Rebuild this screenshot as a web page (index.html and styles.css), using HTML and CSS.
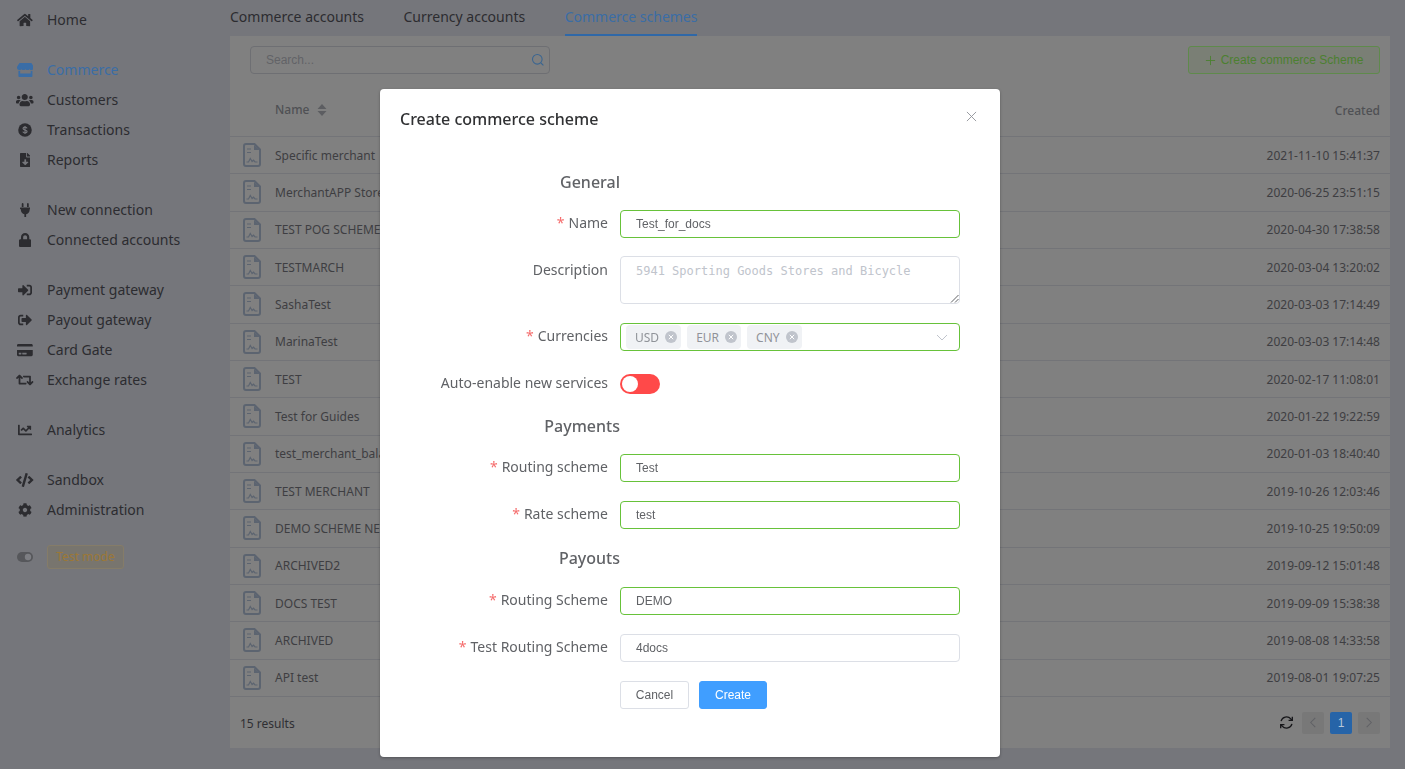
FILE: index.html
```html
<!DOCTYPE html>
<html lang="en">
<head>
<meta charset="utf-8">
<title>Create commerce scheme</title>
<link rel="stylesheet" href="styles.css">
</head>
<body>
<div class="app">
  <aside class="sidebar">
    <nav class="nav-group">
      <a class="nav-item"><span class="nav-icon"><svg class="fa" viewBox="0 0 576 512"><path d="M280.37 148.26L96 300.11V464a16 16 0 0 0 16 16l112.06-.29a16 16 0 0 0 15.92-16V368a16 16 0 0 1 16-16h64a16 16 0 0 1 16 16v95.64a16 16 0 0 0 16 16.05L464 480a16 16 0 0 0 16-16V300L295.67 148.26a12.19 12.19 0 0 0-15.3 0zM571.6 251.47L488 182.56V44.05a12 12 0 0 0-12-12h-56a12 12 0 0 0-12 12v72.61L318.47 43a48 48 0 0 0-61 0L4.34 251.47a12 12 0 0 0-1.6 16.9l25.5 31A12 12 0 0 0 45.15 301l235.22-193.74a12.19 12.19 0 0 1 15.3 0L530.9 301a12 12 0 0 0 16.9-1.6l25.5-31a12 12 0 0 0-1.7-16.93z"/></svg></span>Home</a>
    </nav>
    <nav class="nav-group">
      <a class="nav-item active"><span class="nav-icon"><svg class="fa" viewBox="0 0 616 512"><path d="M602 118.6L537.1 15C531.3 5.7 521 0 510 0H106C95 0 84.7 5.7 78.9 15L14 118.6c-33.9 54.1-3.9 129.3 59.4 137.9 4.6.6 9.2.9 13.7.9 29.9 0 56.4-13.1 74.6-33.4 18.2 20.3 44.8 33.4 74.6 33.4 29.9 0 56.4-13.1 74.6-33.4 18.2 20.3 44.8 33.4 74.6 33.4 29.9 0 56.4-13.1 74.6-33.4 18.3 20.3 44.8 33.4 74.6 33.4 4.6 0 9.1-.3 13.7-.9 63.5-8.5 93.6-83.7 59.6-137.9zM529.5 288c-10 0-19.9-1.5-29.5-3.8V384H116v-99.8c-9.6 2.2-19.5 3.8-29.5 3.8-6 0-12.1-.4-18-1.2-5.6-.8-11.1-2.1-16.4-3.6V480c0 17.7 14.3 32 32 32h448c17.7 0 32-14.3 32-32V283.2c-5.4 1.6-10.8 2.9-16.4 3.6-6.1.8-12.1 1.2-18.2 1.2z"/></svg></span>Commerce</a>
      <a class="nav-item"><span class="nav-icon"><svg class="fa" viewBox="0 0 640 512"><path d="M96 224c35.3 0 64-28.7 64-64s-28.7-64-64-64-64 28.7-64 64 28.7 64 64 64zm448 0c35.3 0 64-28.7 64-64s-28.7-64-64-64-64 28.7-64 64 28.7 64 64 64zm32 32h-64c-17.6 0-33.5 7.1-45.1 18.6 40.3 22.1 68.9 62 75.1 109.4h66c17.7 0 32-14.3 32-32v-32c0-35.3-28.7-64-64-64zm-256 0c61.9 0 112-50.1 112-112S381.9 32 320 32 208 82.1 208 144s50.1 112 112 112zm76.8 32h-8.3c-20.8 10-43.9 16-68.5 16s-47.6-6-68.5-16h-8.3C179.6 288 128 339.6 128 403.2V432c0 26.5 21.5 48 48 48h288c26.5 0 48-21.5 48-48v-28.8c0-63.6-51.6-115.2-115.2-115.2zm-223.7-13.4C161.5 263.1 145.6 256 128 256H64c-35.3 0-64 28.7-64 64v32c0 17.7 14.3 32 32 32h65.9c6.3-47.4 34.9-87.3 75.2-109.4z"/></svg></span>Customers</a>
      <a class="nav-item"><span class="nav-icon"><svg class="fa" viewBox="0 0 512 512"><circle cx="256" cy="256" r="248"/><path class="dollar" d="M330 195c-8-28-36-43-74-43-40 0-72 19-72 53 0 66 148 36 148 104 0 34-32 52-76 52-42 0-70-17-78-47M256 112v288"/></svg></span>Transactions</a>
      <a class="nav-item"><span class="nav-icon"><svg class="fa" viewBox="0 0 384 512"><path d="M224 136V0H24C10.7 0 0 10.7 0 24v464c0 13.3 10.7 24 24 24h336c13.3 0 24-10.7 24-24V160H248c-13.2 0-24-10.8-24-24zm76.45 211.36l-96.42 95.7c-6.65 6.61-17.39 6.61-24.04 0l-96.42-95.7C73.42 337.29 80.54 320 94.82 320H160v-80c0-8.84 7.16-16 16-16h32c8.84 0 16 7.16 16 16v80h65.18c14.28 0 21.4 17.29 11.27 27.36zM377 105L279.1 7c-4.5-4.5-10.6-7-17-7H256v128h128v-6.1c0-6.3-2.5-12.4-7-16.9z"/></svg></span>Reports</a>
    </nav>
    <nav class="nav-group">
      <a class="nav-item"><span class="nav-icon"><svg class="fa" viewBox="0 0 384 512"><path d="M256 144V32c0-17.673 14.327-32 32-32s32 14.327 32 32v112h-64zm112 16H16c-8.837 0-16 7.163-16 16v32c0 8.837 7.163 16 16 16h16v32c0 77.406 54.969 141.971 128 156.796V512h64v-99.204c73.031-14.825 128-79.39 128-156.796v-32h16c8.837 0 16-7.163 16-16v-32c0-8.837-7.163-16-16-16zm-240-16V32c0-17.673-14.327-32-32-32S64 14.327 64 32v112h64z"/></svg></span>New connection</a>
      <a class="nav-item"><span class="nav-icon"><svg class="fa" viewBox="0 0 448 512"><path d="M400 224h-24v-72C376 68.2 307.8 0 224 0S72 68.2 72 152v72H48c-26.5 0-48 21.5-48 48v192c0 26.5 21.5 48 48 48h352c26.5 0 48-21.5 48-48V272c0-26.5-21.5-48-48-48zm-104 0H152v-72c0-39.7 32.3-72 72-72s72 32.3 72 72v72z"/></svg></span>Connected accounts</a>
    </nav>
    <nav class="nav-group">
      <a class="nav-item"><span class="nav-icon"><svg class="fa" viewBox="0 0 512 512"><path d="M416 448h-84c-6.6 0-12-5.4-12-12v-40c0-6.6 5.4-12 12-12h84c17.7 0 32-14.3 32-32V160c0-17.7-14.3-32-32-32h-84c-6.6 0-12-5.4-12-12V76c0-6.6 5.4-12 12-12h84c53 0 96 43 96 96v192c0 53-43 96-96 96zm-47-201L201 79c-15-15-41-4.5-41 17v96H24c-13.3 0-24 10.7-24 24v96c0 13.3 10.7 24 24 24h136v96c0 21.5 26 32 41 17l168-168c9.3-9.4 9.3-24.6 0-34z"/></svg></span>Payment gateway</a>
      <a class="nav-item"><span class="nav-icon"><svg class="fa" viewBox="0 0 512 512"><path d="M497 273L329 441c-15 15-41 4.5-41-17v-96H152c-13.3 0-24-10.7-24-24v-96c0-13.3 10.7-24 24-24h136V88c0-21.4 25.9-32 41-17l168 168c9.3 9.4 9.3 24.6 0 34zM192 436v-40c0-6.6-5.4-12-12-12H96c-17.7 0-32-14.3-32-32V160c0-17.7 14.3-32 32-32h84c6.6 0 12-5.4 12-12V76c0-6.6-5.4-12-12-12H96c-53 0-96 43-96 96v192c0 53 43 96 96 96h84c6.6 0 12-5.4 12-12z"/></svg></span>Payout gateway</a>
      <a class="nav-item"><span class="nav-icon"><svg class="fa" viewBox="0 0 576 512"><path d="M0 432c0 26.5 21.5 48 48 48h480c26.5 0 48-21.5 48-48V256H0v176zm192-68c0-6.6 5.4-12 12-12h136c6.6 0 12 5.4 12 12v40c0 6.6-5.4 12-12 12H204c-6.6 0-12-5.4-12-12v-40zm-128 0c0-6.6 5.4-12 12-12h72c6.6 0 12 5.4 12 12v40c0 6.6-5.4 12-12 12H76c-6.6 0-12-5.4-12-12v-40zM576 80v48H0V80c0-26.5 21.5-48 48-48h480c26.5 0 48 21.5 48 48z"/></svg></span>Card Gate</a>
      <a class="nav-item"><span class="nav-icon"><svg class="fa" viewBox="0 0 640 512"><path d="M629.657 343.598L528.971 444.284c-9.373 9.372-24.568 9.372-33.941 0L394.343 343.598c-9.373-9.373-9.373-24.569 0-33.941l10.823-10.823c9.562-9.562 25.133-9.34 34.419.492L480 342.118V160H292.451a24.005 24.005 0 0 1-16.971-7.029l-16-16C244.361 121.851 255.069 96 276.451 96H520c13.255 0 24 10.745 24 24v222.118l40.416-42.792c9.285-9.831 24.856-10.054 34.419-.492l10.823 10.823c9.372 9.372 9.372 24.569-.001 33.941zm-265.138 15.431A23.999 23.999 0 0 0 347.548 352H160V169.881l40.416 42.792c9.286 9.831 24.856 10.054 34.419.491l10.822-10.822c9.373-9.373 9.373-24.569 0-33.941L144.971 67.716c-9.373-9.373-24.569-9.373-33.941 0L10.343 168.402c-9.373 9.373-9.373 24.569 0 33.941l10.822 10.822c9.562 9.562 25.133 9.34 34.419-.491L96 169.881V392c0 13.255 10.745 24 24 24h243.549c21.382 0 32.09-25.851 16.971-40.971l-16.001-16z"/></svg></span>Exchange rates</a>
    </nav>
    <nav class="nav-group">
      <a class="nav-item"><span class="nav-icon"><svg class="fa" viewBox="0 0 512 512"><path d="M496 384H64V80c0-8.84-7.16-16-16-16H16C7.16 64 0 71.16 0 80v336c0 17.67 14.33 32 32 32h464c8.84 0 16-7.16 16-16v-32c0-8.84-7.16-16-16-16zM464 96H345.94c-21.38 0-32.09 25.85-16.97 40.97l32.4 32.4L288 242.75l-73.37-73.37c-12.5-12.5-32.76-12.5-45.25 0l-68.69 68.69c-6.25 6.25-6.25 16.38 0 22.63l22.62 22.62c6.25 6.25 16.38 6.25 22.63 0L192 237.25l73.37 73.37c12.5 12.5 32.76 12.5 45.25 0l96-96 32.4 32.4c15.12 15.12 40.97 4.41 40.97-16.97V112c.01-8.84-7.15-16-15.99-16z"/></svg></span>Analytics</a>
    </nav>
    <nav class="nav-group">
      <a class="nav-item"><span class="nav-icon"><svg class="fa" viewBox="0 0 640 512"><path d="M278.9 511.5l-61-17.7c-6.4-1.8-10-8.5-8.2-14.9L346.2 8.7c1.8-6.4 8.5-10 14.9-8.2l61 17.7c6.4 1.8 10 8.5 8.2 14.9L293.8 503.3c-1.9 6.4-8.5 10.1-14.9 8.2zm-114-112.2l43.5-46.4c4.6-4.9 4.3-12.7-.8-17.2L117 256l90.6-79.7c5.1-4.5 5.5-12.3.8-17.2l-43.5-46.4c-4.5-4.8-12.1-5.1-17-.5L3.8 247.2c-5.1 4.7-5.1 12.8 0 17.5l144.1 135.1c4.9 4.6 12.5 4.4 17-.5zm327.2.6l144.1-135.1c5.1-4.7 5.1-12.8 0-17.5L492.1 112.1c-4.8-4.5-12.4-4.3-17 .5L431.6 159c-4.6 4.9-4.3 12.7.8 17.2L523 256l-90.6 79.7c-5.1 4.5-5.5 12.3-.8 17.2l43.5 46.4c4.5 4.9 12.1 5.1 17 .6z"/></svg></span>Sandbox</a>
      <a class="nav-item"><span class="nav-icon"><svg class="fa" viewBox="0 0 512 512"><path d="M487.4 315.7l-42.6-24.6c4.3-23.2 4.3-47 0-70.2l42.6-24.6c4.9-2.8 7.1-8.6 5.5-14-11.1-35.6-30-67.8-54.7-94.6-3.8-4.1-10-5.1-14.8-2.3L380.8 110c-17.9-15.4-38.5-27.3-60.8-35.1V25.8c0-5.6-3.9-10.5-9.4-11.7-36.7-8.2-74.3-7.8-109.2 0-5.5 1.2-9.4 6.1-9.4 11.7V75c-22.2 7.9-42.8 19.8-60.8 35.1L88.7 85.5c-4.9-2.8-11-1.9-14.8 2.3-24.7 26.7-43.6 58.9-54.7 94.6-1.7 5.4.6 11.2 5.5 14L67.3 221c-4.3 23.2-4.3 47 0 70.2l-42.6 24.6c-4.9 2.8-7.1 8.6-5.5 14 11.1 35.6 30 67.8 54.7 94.6 3.8 4.1 10 5.1 14.8 2.3l42.6-24.6c17.9 15.4 38.5 27.3 60.8 35.1v49.2c0 5.6 3.9 10.5 9.4 11.7 36.7 8.2 74.3 7.8 109.2 0 5.5-1.2 9.4-6.1 9.4-11.7v-49.2c22.2-7.9 42.8-19.8 60.8-35.1l42.6 24.6c4.9 2.8 11 1.9 14.8-2.3 24.7-26.7 43.6-58.9 54.7-94.6 1.5-5.5-.7-11.3-5.6-14.1zM256 336c-44.1 0-80-35.9-80-80s35.9-80 80-80 80 35.9 80 80-35.9 80-80 80z"/></svg></span>Administration</a>
    </nav>
    <div class="mode-row">
      <span class="nav-icon"><svg class="mode-toggle" viewBox="0 0 16 10"><rect width="16" height="10" rx="5"/><circle cx="11" cy="5" r="3.2"/></svg></span>
      <span class="mode-tag">Test mode</span>
    </div>
  </aside>

  <main class="main">
    <div class="tabs">
      <a class="tab">Commerce accounts</a>
      <a class="tab">Currency accounts</a>
      <a class="tab tab-active">Commerce schemes</a>
    </div>
    <section class="card">
      <div class="toolbar">
        <div class="search">
          <span>Search...</span>
          <svg class="search-icon" viewBox="0 0 14 14"><circle cx="6.300" cy="6.300" r="4.800"/><path d="M10 10l2.400 2.400"/></svg>
        </div>
        <button class="create-btn"><svg class="plus" viewBox="0 0 12 12"><path d="M6 1v10M1 6h10"/></svg>Create commerce Scheme</button>
      </div>
      <div class="table-head">
        <span class="th-name">Name<svg class="sort" viewBox="0 0 10 14"><path d="M5 1l4.500 5h-9zM5 13l4.500-5h-9z"/></svg></span>
        <span class="th-created">Created</span>
      </div>
      <div class="rows">
        <div class="row"><span class="cell-name"><svg class="file" viewBox="0 0 18 24"><use href="#file-glyph"/></svg>Specific merchant</span><span>2021-11-10 15:41:37</span></div>
        <div class="row"><span class="cell-name"><svg class="file" viewBox="0 0 18 24"><use href="#file-glyph"/></svg>MerchantAPP Store</span><span>2020-06-25 23:51:15</span></div>
        <div class="row"><span class="cell-name"><svg class="file" viewBox="0 0 18 24"><use href="#file-glyph"/></svg>TEST POG SCHEME</span><span>2020-04-30 17:38:58</span></div>
        <div class="row"><span class="cell-name"><svg class="file" viewBox="0 0 18 24"><use href="#file-glyph"/></svg>TESTMARCH</span><span>2020-03-04 13:20:02</span></div>
        <div class="row"><span class="cell-name"><svg class="file" viewBox="0 0 18 24"><use href="#file-glyph"/></svg>SashaTest</span><span>2020-03-03 17:14:49</span></div>
        <div class="row"><span class="cell-name"><svg class="file" viewBox="0 0 18 24"><use href="#file-glyph"/></svg>MarinaTest</span><span>2020-03-03 17:14:48</span></div>
        <div class="row"><span class="cell-name"><svg class="file" viewBox="0 0 18 24"><use href="#file-glyph"/></svg>TEST</span><span>2020-02-17 11:08:01</span></div>
        <div class="row"><span class="cell-name"><svg class="file" viewBox="0 0 18 24"><use href="#file-glyph"/></svg>Test for Guides</span><span>2020-01-22 19:22:59</span></div>
        <div class="row"><span class="cell-name"><svg class="file" viewBox="0 0 18 24"><use href="#file-glyph"/></svg>test_merchant_balance</span><span>2020-01-03 18:40:40</span></div>
        <div class="row"><span class="cell-name"><svg class="file" viewBox="0 0 18 24"><use href="#file-glyph"/></svg>TEST MERCHANT</span><span>2019-10-26 12:03:46</span></div>
        <div class="row"><span class="cell-name"><svg class="file" viewBox="0 0 18 24"><use href="#file-glyph"/></svg>DEMO SCHEME NEW</span><span>2019-10-25 19:50:09</span></div>
        <div class="row"><span class="cell-name"><svg class="file" viewBox="0 0 18 24"><use href="#file-glyph"/></svg>ARCHIVED2</span><span>2019-09-12 15:01:48</span></div>
        <div class="row"><span class="cell-name"><svg class="file" viewBox="0 0 18 24"><use href="#file-glyph"/></svg>DOCS TEST</span><span>2019-09-09 15:38:38</span></div>
        <div class="row"><span class="cell-name"><svg class="file" viewBox="0 0 18 24"><use href="#file-glyph"/></svg>ARCHIVED</span><span>2019-08-08 14:33:58</span></div>
        <div class="row"><span class="cell-name"><svg class="file" viewBox="0 0 18 24"><use href="#file-glyph"/></svg>API test</span><span>2019-08-01 19:07:25</span></div>
      </div>
      <div class="table-foot">
        <span class="results">15 results</span>
        <div class="pager">
          <svg class="refresh" viewBox="0 0 16 16"><path d="M2.200 6.600A6 6 0 0 1 12.600 4.200L14 5.600M13.800 9.400A6 6 0 0 1 3.400 11.800L2 10.400"/><path d="M14.200 1.800v4h-4M1.800 14.200v-4h4"/></svg>
          <span class="page-btn"><svg class="chev" viewBox="0 0 8 12"><path d="M6.500 1L1.500 6l5 5"/></svg></span>
          <span class="page-btn page-current">1</span>
          <span class="page-btn"><svg class="chev" viewBox="0 0 8 12"><path d="M1.500 1l5 5-5 5"/></svg></span>
        </div>
      </div>
    </section>
  </main>
</div>

<svg class="defs" aria-hidden="true"><defs><g id="file-glyph"><path fill="none" stroke-width="2" d="M3 1h8.500L17 6.500V21a2 2 0 0 1-2 2H3a2 2 0 0 1-2-2V3a2 2 0 0 1 2-2z"/><path class="file-fold" stroke="none" d="M11 2v5h5.500z"/><path fill="none" stroke-width="1.200" d="M4 6h4M4 9.500h4"/><path fill="none" stroke-width="1.200" d="M3.500 19h2l1.800-3.500 1.800 3 1.400-1.300 1.500 1.800h2.500"/></g></defs></svg>

<div class="modal-wrap">
  <div class="modal" role="dialog">
    <div class="modal-head">
      <h2 class="modal-title">Create commerce scheme</h2>
      <svg class="close" viewBox="0 0 12 12"><path d="M1 1l10 10M11 1L1 11"/></svg>
    </div>
    <form class="form">
      <h3 class="section first">General</h3>
      <div class="field gap-18"><label class="label"><i>*</i>Name</label><div class="input ok">Test_for_docs</div></div>
      <div class="field gap-19"><label class="label label-low">Description</label><div class="textarea">5941 Sporting Goods Stores and Bicycle<svg class="grip" viewBox="0 0 9 9"><path d="M8.500 1L1 8.500M8.500 5L5 8.500"/></svg></div></div>
      <div class="field gap-19"><label class="label"><i>*</i>Currencies</label>
        <div class="select ok">
          <span class="tag">USD<svg class="tag-x" viewBox="0 0 12 12"><circle cx="6" cy="6" r="6"/><path d="M3.800 3.800l4.400 4.400M8.200 3.800L3.800 8.200"/></svg></span>
          <span class="tag">EUR<svg class="tag-x" viewBox="0 0 12 12"><circle cx="6" cy="6" r="6"/><path d="M3.800 3.800l4.400 4.400M8.200 3.800L3.800 8.200"/></svg></span>
          <span class="tag">CNY<svg class="tag-x" viewBox="0 0 12 12"><circle cx="6" cy="6" r="6"/><path d="M3.800 3.800l4.400 4.400M8.200 3.800L3.800 8.200"/></svg></span>
          <svg class="caret" viewBox="0 0 12 7"><path d="M1 1l5 5 5-5"/></svg>
        </div>
      </div>
      <div class="field gap-19"><label class="label">Auto-enable new services</label><span class="switch"><span class="knob"></span></span></div>
      <h3 class="section">Payments</h3>
      <div class="field gap-19"><label class="label"><i>*</i>Routing scheme</label><div class="input ok">Test</div></div>
      <div class="field gap-18"><label class="label"><i>*</i>Rate scheme</label><div class="input ok">test</div></div>
      <h3 class="section payouts">Payouts</h3>
      <div class="field gap-19"><label class="label"><i>*</i>Routing Scheme</label><div class="input ok">DEMO</div></div>
      <div class="field gap-19"><label class="label"><i>*</i>Test Routing Scheme</label><div class="input">4docs</div></div>
      <div class="actions">
        <button type="button" class="btn">Cancel</button>
        <button type="button" class="btn btn-primary">Create</button>
      </div>
    </form>
  </div>
</div>
</body>
</html>
```
FILE: styles.css
```css
* { box-sizing: border-box; }
html, body { margin: 0; height: 769px; overflow: hidden; }
body {
  background: #75767b;
  color: #2c2c30;
  font-family: "Noto Sans", sans-serif;
  font-size: 14px;
}
.app { display: flex; height: 769px; }
.defs { width: 0; height: 0; position: absolute; }

/* Sidebar */
.sidebar { width: 230px; flex: none; padding: 5px 0 0 16px; }
.nav-group { margin-bottom: 20px; }
.nav-item { display: flex; align-items: center; height: 30px; gap: 13px; padding-bottom: 2px; }
.nav-item.active { color: #3a6da6; }
.nav-icon { width: 18px; display: flex; justify-content: center; align-items: center; flex: none; }
.nav-item .nav-icon { margin-top: 2px; }
.fa { height: 14px; fill: currentColor; display: block; }
.dollar { fill: none; stroke: #75767b; stroke-width: 44; }
.mode-row { display: flex; align-items: center; gap: 13px; height: 24px; }
.mode-toggle { width: 16px; height: 10px; }
.mode-toggle rect { fill: #56575b; }
.mode-toggle circle { fill: #7d7e83; }
.mode-tag {
  width: 77px; height: 24px; line-height: 21px; text-align: center;
  font-size: 12px; color: #9c7836;
  background: #78756e; border: 1px solid #857c68; border-radius: 3px;
}

/* Main */
.main { flex: 1; display: flex; flex-direction: column; padding: 0 15px 21px 0; min-width: 0; }
.tabs { display: flex; gap: 39.5px; height: 36px; flex: none; }
.tab { height: 36px; line-height: 34px; }
.tab-active { color: #3a6da6; border-bottom: 2px solid #2f68a8; }
.card { flex: 1; background: #808080; display: flex; flex-direction: column; }
.toolbar { display: flex; justify-content: space-between; padding: 10px 10px 0 20px; }
.search {
  width: 300px; height: 28px; display: flex; align-items: center; justify-content: space-between;
  padding: 0 4px 0 15px; border: 1px solid #6e6f73; border-radius: 4px;
  font-family: "Liberation Sans", sans-serif; font-size: 12px; color: #626367;
}
.search-icon { width: 14px; height: 14px; fill: none; stroke: #3a6590; stroke-width: 1.1; }
.create-btn {
  width: 192px; height: 28px; display: flex; align-items: center; justify-content: center; gap: 5px;
  padding: 0; background: #7a7f75; border: 1px solid #5f8a4c; border-radius: 3px;
  font-family: "Liberation Sans", sans-serif; font-size: 12px; color: #4c8030;
}
.plus { width: 11px; height: 11px; fill: none; stroke: #4c8030; stroke-width: 1; }
.table-head {
  height: 63px; display: flex; justify-content: space-between; align-items: center;
  padding: 9px 10px 0 45px; border-bottom: 1px solid #737478;
  font-size: 12px; font-weight: 500; color: #4f5054;
}
.th-name { display: flex; align-items: center; gap: 8px; }
.th-created { padding-top: 2px; }
.sort { width: 10px; height: 14px; fill: #5c5d61; }
.rows { flex: none; }
.row {
  height: 37.33px; display: flex; justify-content: space-between; align-items: center;
  padding: 0 10px 0 13px; border-bottom: 1px solid #737478;
  font-size: 12px; color: #3e3e42;
}
.cell-name { display: flex; align-items: center; gap: 14px; white-space: nowrap; }
.file { width: 18px; height: 24px; margin: -4px 0; stroke: #5c6470; flex: none; }
.file-fold { fill: #5c6470; }
.table-foot {
  flex: 1; display: flex; justify-content: space-between; align-items: center;
  padding: 1px 10px 0; font-size: 12px; color: #2f2f33;
}
.results { padding-top: 2px; }
.pager { display: flex; align-items: center; gap: 6px; }
.refresh { width: 15px; height: 15px; margin-right: 2px; fill: none; stroke: #17171a; stroke-width: 1.4; }
.page-btn {
  width: 22px; height: 22px; display: flex; align-items: center; justify-content: center;
  background: #787878; border-radius: 2px; font-family: "Liberation Sans", sans-serif; font-size: 12px;
}
.page-current { background: #2664a8; color: #b8c8da; }
.chev { width: 8px; height: 11px; fill: none; stroke: #606165; stroke-width: 1.1; }

/* Modal */
.modal-wrap { position: fixed; inset: 0; padding: 89px 0 0 380px; }
.modal {
  width: 620px; height: 668px; background: #fff; border-radius: 4px;
  box-shadow: 0 1px 3px rgba(0,0,0,.3); color: #606266;
}
.modal-head { display: flex; justify-content: space-between; padding: 19px 23px 0 20px; height: 41px; }
.modal-title { margin: 0; font-size: 16px; line-height: 22px; font-weight: 500; color: #303133; }
.close { width: 11px; height: 11px; margin-top: 3px; fill: none; stroke: #909399; stroke-width: 1; }
.form { display: block; }
.section { width: 240px; margin: 0 0 17px; font-size: 16px; line-height: 22px; font-weight: 500; text-align: right; color: #606266; }
.section.first { margin-top: 41px; }
.section.payouts { margin-bottom: 18px; }
.field { display: flex; gap: 12px; align-items: flex-start; }
.gap-18 { margin-bottom: 18px; }
.gap-19 { margin-bottom: 19px; }
.label { width: 228px; flex: none; text-align: right; line-height: 26px; font-size: 14px; color: #606266; }
.label-low { line-height: 28px; }
.label i { font-style: normal; color: #f56c6c; margin-right: 4px; }
.input, .select, .textarea { width: 340px; border: 1px solid #dcdfe6; border-radius: 4px; background: #fff; }
.input {
  height: 28px; line-height: 26px; padding: 0 15px;
  font-family: "Liberation Sans", sans-serif; font-size: 12px; color: #606266;
}
.ok { border-color: #67c23a; }
.textarea {
  height: 48px; padding: 4px 15px; position: relative;
  font-family: "DejaVu Sans Mono", monospace; font-size: 12px; line-height: 20px; color: #c0c4cc;
}
.grip { position: absolute; right: 0; bottom: 0; width: 9px; height: 9px; fill: none; stroke: #606266; stroke-width: 1; }
.select { height: 28px; display: flex; align-items: center; gap: 6px; padding: 0 11px 0 5px; }
.tag {
  height: 24px; display: flex; align-items: center; gap: 6px; padding: 0 4px 0 9px;
  background: #f0f2f5; border-radius: 4px; font-size: 12px; color: #909399;
}
.tag-x { width: 12px; height: 12px; }
.tag-x circle { fill: #c0c4cc; }
.tag-x path { stroke: #fff; stroke-width: 1; }
.caret { width: 12px; height: 7px; margin-left: auto; fill: none; stroke: #c0c4cc; stroke-width: 1; }
.switch { width: 40px; height: 20px; margin-top: 4px; border-radius: 10px; background: #ff4949; padding: 2px; display: block; }
.knob { display: block; width: 16px; height: 16px; border-radius: 50%; background: #fff; }
.actions { display: flex; gap: 10px; padding-left: 240px; }
.btn {
  width: 69px; height: 28px; padding: 0; background: #fff; border: 1px solid #dcdfe6; border-radius: 3px;
  font-family: "Liberation Sans", sans-serif; font-size: 12px; color: #606266;
}
.btn-primary { width: 68px; background: #409eff; border-color: #409eff; color: #fff; }
```
